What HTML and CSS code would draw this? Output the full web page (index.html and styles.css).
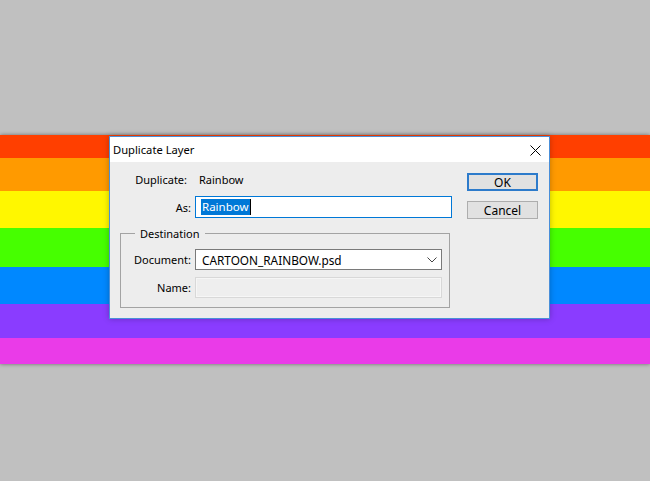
FILE: index.html
```html
<!DOCTYPE html>
<html>
<head>
<meta charset="utf-8">
<link rel="stylesheet" href="styles.css">
</head>
<body>
<div class="screen">
  <div class="band">
    <div class="stripe s-red"></div>
    <div class="stripe s-orange"></div>
    <div class="stripe s-yellow"></div>
    <div class="stripe s-green"></div>
    <div class="stripe s-blue"></div>
    <div class="stripe s-purple"></div>
    <div class="stripe s-magenta"></div>
  </div>
  <div class="dialog">
    <div class="titlebar">
      <span class="title">Duplicate Layer</span>
      <span class="close">
        <svg width="11" height="11" viewBox="0 0 11 11"><path d="M0.5 0.5L10.5 10.5M10.5 0.5L0.5 10.5" stroke="#000" stroke-width="1" fill="none"/></svg>
      </span>
    </div>
    <div class="body">
      <div class="form">
        <div class="row row-dup"><span class="label lbl-dup">Duplicate:</span><span class="value">Rainbow</span></div>
        <div class="row row-as"><span class="label">As:</span><div class="input input-as"><span class="sel">Rainbow</span><span class="caret"></span></div></div>
        <fieldset class="group">
          <legend>Destination</legend>
          <div class="row grow"><span class="label glabel">Document:</span><div class="select"><span class="select-text">CARTOON_RAINBOW.psd</span><svg class="chev" width="10" height="6" viewBox="0 0 10 6"><path d="M0.5 0.5L5 5L9.5 0.5" stroke="#444" stroke-width="1" fill="none"/></svg></div></div>
          <div class="row grow"><span class="label glabel">Name:</span><div class="input disabled"></div></div>
        </fieldset>
      </div>
      <div class="buttons">
        <div class="btn btn-ok">OK</div>
        <div class="btn btn-cancel">Cancel</div>
      </div>
    </div>
  </div>
</div>
</body>
</html>
```

FILE: styles.css
```css
* { box-sizing: border-box; }
html, body { margin: 0; padding: 0; }
body {
  background: #c0c0c0;
  font-family: "Noto Sans", "Open Sans", sans-serif;
  font-size: 11px;
  color: #000;
}
.screen {
  position: relative;
  width: 650px;
  height: 481px;
  padding-top: 135px;
  background: #c0c0c0;
  overflow: hidden;
}
.band {
  display: flex;
  flex-direction: column;
  box-shadow: 0 0 4px rgba(0,0,0,0.45);
}
.stripe { width: 100%; }
.s-red { height: 23px; background: #ff3f00; }
.s-orange { height: 33px; background: #ff9a00; }
.s-yellow { height: 37px; background: #fff700; }
.s-green { height: 39px; background: #46ff00; }
.s-blue { height: 37px; background: #0088ff; }
.s-purple { height: 34px; background: #8a3cff; }
.s-magenta { height: 26px; background: #ea3be8; }

.dialog {
  position: absolute;
  left: 109px;
  top: 136px;
  width: 441px;
  height: 183px;
  border: 1px solid #4a8fd9;
  background: #ededed;
  box-shadow: 0 0 6px rgba(0,0,0,0.25);
  display: flex;
  flex-direction: column;
}
.titlebar {
  height: 25px;
  background: #fff;
  display: flex;
  align-items: center;
  padding-left: 3px;
  padding-right: 8px;
}
.title { font-size: 11.2px; flex: 1; }
.close { display: flex; width: 11px; height: 11px; margin-top: 1px; }

.body { display: flex; flex: 1; }
.form { width: 342px; padding-top: 10px; }
.row { display: flex; align-items: center; }
.label { text-align: right; white-space: nowrap; }
.row-dup { height: 16px; line-height: 16px; }
.lbl-dup { width: 77px; }
.value { margin-left: 12px; }
.row-as { margin-top: 8px; }
.row-as .label { width: 81px; margin-right: 4px; }
.input {
  height: 22px;
  background: #fff;
  border: 1px solid #0078d7;
  display: flex;
  align-items: center;
  padding-left: 5px;
}
.input-as { width: 257px; }
.sel {
  background: #0078d7;
  color: #fff;
  line-height: 16px;
  padding: 0 1px;
  font-size: 11.5px;
}
.caret { width: 1px; height: 16px; background: #000; }

.group {
  margin: 7px 0 0 10px;
  width: 330px;
  padding: 0 0 9px 0;
  border: 1px solid #a3a3a3;
  min-width: 0;
}
.group legend {
  margin-left: 14px;
  padding: 0 5px;
  line-height: 17px;
}
.grow { margin-top: 7px; }
.glabel { width: 70px; margin-right: 4px; }
.select {
  width: 247px;
  height: 21px;
  background: #fff;
  border: 1px solid #7a7a7a;
  display: flex;
  align-items: center;
  justify-content: space-between;
  padding: 0 4px 0 6px;
}
.select-text { font-size: 11.8px; }
.chev { display: block; }
.input.disabled {
  width: 247px;
  height: 21px;
  background: #eeeeee;
  border: 1px solid #d8d8d8;
  box-shadow: inset 0 0 0 1px #f6f6f6;
}

.buttons {
  margin-left: 15px;
  padding-top: 11px;
  display: flex;
  flex-direction: column;
}
.btn {
  width: 71px;
  height: 18px;
  background: #e1e1e1;
  border: 1px solid #adadad;
  display: flex;
  align-items: center;
  justify-content: center;
  font-size: 12px;
}
.btn-ok { border: 2px solid #2d7bcb; }
.btn-cancel { margin-top: 10px; }
```
